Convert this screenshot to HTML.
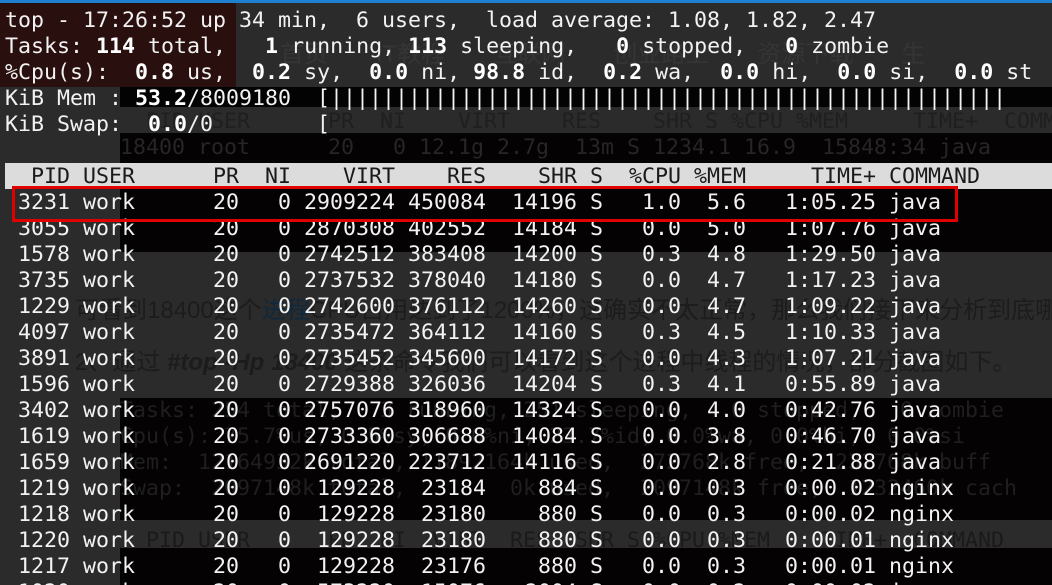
<!DOCTYPE html>
<html><head><meta charset="utf-8"><style>
html,body{margin:0;padding:0;width:1052px;height:585px;overflow:hidden;background:#2b2b2b;position:relative}
.r{position:absolute}
pre{position:absolute;left:5px;top:8px;margin:0;font-family:"DejaVu Sans Mono","Liberation Mono",monospace;font-size:21.6px;line-height:26px;color:#f2f2f2;white-space:pre;z-index:5}
b{font-weight:bold;color:#fff}
.h{color:#1a1a1a}
.g{position:absolute;font-family:"Liberation Sans","Noto Sans CJK SC",sans-serif;font-size:24px;color:#1c1c1c;z-index:2;white-space:nowrap}
.gm{position:absolute;font-family:"DejaVu Sans Mono",monospace;font-size:21.6px;color:#1f1f1f;z-index:2;white-space:pre}
</style></head><body>
<div class="r" style="left:0;top:0;width:1052px;height:3px;background:#1f7fd0"></div>
<div class="r" style="left:0;top:3px;width:236px;height:84px;background:#2a0f0f"></div>
<div class="r" style="left:120px;top:87px;width:932px;height:20px;background:#030303"></div>
<div class="r" style="left:120px;top:133px;width:932px;height:30px;background:#050203"></div>
<div class="r" style="left:5px;top:163px;width:1047px;height:26px;background:#dcdcdc;z-index:3"></div>
<div class="r" style="left:120px;top:189px;width:932px;height:63px;background:#050203"></div>
<div class="r" style="left:120px;top:398px;width:932px;height:122px;background:#050203"></div>
<div class="r" style="left:120px;top:548px;width:932px;height:37px;background:#050203"></div>
<div class="g" style="left:280px;top:34px;color:#353535">首页　　IT教程　　互联网　　创业路上　　资源下载　　生</div>
<div class="gm" style="left:120px;top:109px">  PID USER      PR  NI    VIRT    RES    SHR S %CPU %MEM     TIME+  COMMAND</div>
<div class="gm" style="left:120px;top:135px;color:#262626">18400 root      20   0 12.1g 2.7g  13m S 1234.1 16.9  15848:34 java</div>
<div class="g" style="left:75px;top:290px">可看到18400这个<span style="color:#10283c">进程</span>CPU占用达到了1200%，这确实不太正常，那么我们接下来分析到底哪些<span style="color:#10283c">线程</span></div>
<div class="g" style="left:75px;top:342px">2、通过 <i><b style="color:#1c1c1c">#top -Hp 18400</b></i> 这条命令我们可以看到这个进程中线程的情况，部分截图如下。</div>
<div class="gm" style="left:120px;top:398px">Tasks: 254 total,   3 running, 251 sleeping,   0 stopped,   0 zombie</div>
<div class="gm" style="left:120px;top:424px">Cpu(s): 75.7%us, 0.5%sy, 0.0%ni, 23.7%id, 0.0%wa, 0.0%hi,  0.0%si</div>
<div class="gm" style="left:120px;top:450px">Mem:  12164932k total, 11892164k used,  272768k free,  232768k buff</div>
<div class="gm" style="left:120px;top:476px">Swap:  2097148k total,        0k used,  2097148k free,  1232460k cach</div>
<div class="gm" style="left:120px;top:528px;color:#1a1a1a">  PID USER      PR  NI  VIRT  RES  SHR S %CPU %MEM    TIME+  COMMAND</div>
<div class="r" style="left:12px;top:186px;width:940px;height:30px;border:3px solid #e00000;z-index:6"></div>
<pre>top - 17:26:52 up 34 min,  6 users,  load average: 1.08, 1.82, 2.47
Tasks: <b>114</b> total,   <b>1</b> running, <b>113</b> sleeping,   <b>0</b> stopped,   <b>0</b> zombie
%Cpu(s):  <b>0.8</b> us,  <b>0.2</b> sy,  <b>0.0</b> ni, <b>98.8</b> id,  <b>0.2</b> wa,  <b>0.0</b> hi,  <b>0.0</b> si,  <b>0.0</b> st
KiB Mem : <b>53.2</b>/8009180  [||||||||||||||||||||||||||||||||||||||||||||||||||||
KiB Swap:  <b>0.0</b>/0        [

<span class="h">  PID USER      PR  NI    VIRT    RES    SHR S  %CPU %MEM     TIME+ COMMAND</span>
 3231 work      20   0 2909224 450084  14196 S   1.0  5.6   1:05.25 java
 3055 work      20   0 2870308 402552  14184 S   0.0  5.0   1:07.76 java
 1578 work      20   0 2742512 383408  14200 S   0.3  4.8   1:29.50 java
 3735 work      20   0 2737532 378040  14180 S   0.0  4.7   1:17.23 java
 1229 work      20   0 2742600 376112  14260 S   0.0  4.7   1:09.22 java
 4097 work      20   0 2735472 364112  14160 S   0.3  4.5   1:10.33 java
 3891 work      20   0 2735452 345600  14172 S   0.0  4.3   1:07.21 java
 1596 work      20   0 2729388 326036  14204 S   0.3  4.1   0:55.89 java
 3402 work      20   0 2757076 318960  14324 S   0.0  4.0   0:42.76 java
 1619 work      20   0 2733360 306688  14084 S   0.0  3.8   0:46.70 java
 1659 work      20   0 2691220 223712  14116 S   0.0  2.8   0:21.88 java
 1219 work      20   0  129228  23184    884 S   0.0  0.3   0:00.02 nginx
 1218 work      20   0  129228  23180    880 S   0.0  0.3   0:00.02 nginx
 1220 work      20   0  129228  23180    880 S   0.0  0.3   0:00.01 nginx
 1217 work      20   0  129228  23176    880 S   0.0  0.3   0:00.01 nginx
 1020 work      20   0  573220  15076   2004 S   0.0  0.2   0:00.02 java</pre>
</body></html>
